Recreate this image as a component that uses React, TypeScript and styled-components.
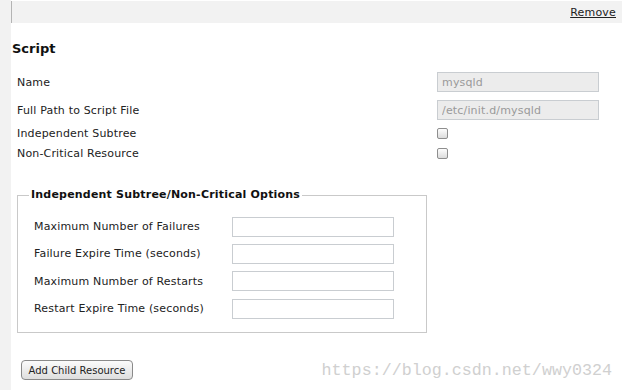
import React from "react";
import styled, { createGlobalStyle } from "styled-components";

const Global = createGlobalStyle`
  html, body { margin: 0; padding: 0; background: #fff; }
  body { font-family: "DejaVu Sans", "Liberation Sans", sans-serif; font-size: 11px; color: #222; }
`;

const Page = styled.div`
  display: flex;
  width: 622px;
  height: 390px;
  overflow: hidden;
`;

const LeftStrip = styled.div`
  width: 11px;
  flex: none;
  background: #f2f2f2;
`;

const Main = styled.div`
  flex: 1;
  display: flex;
  flex-direction: column;
`;

const TopBar = styled.div`
  margin-top: 1px;
  height: 22px;
  background: #f2f2f2;
  border-left: 1px solid #b4b4b4;
  display: flex;
  justify-content: flex-end;
  align-items: flex-end;
  padding: 0 6px 4px 0;
  box-sizing: border-box;
`;

const RemoveLink = styled.a`
  color: #222;
  text-decoration: underline;
  font-size: 11px;
  line-height: 13px;
  letter-spacing: 0.2px;
  cursor: pointer;
`;

const Heading = styled.h3`
  margin: 18px 0 0 1px;
  font-size: 13px;
  font-weight: bold;
  line-height: 16px;
  color: #111;
`;

const Form = styled.div`
  display: flex;
  flex-direction: column;
  margin: 11px 0 0 6px;
`;

const Row = styled.div<{ $h: number; $labelW: number }>`
  display: grid;
  grid-template-columns: ${(p) => p.$labelW}px auto;
  align-items: center;
  height: ${(p) => p.$h}px;
`;

const Label = styled.span`
  font-size: 11px;
  letter-spacing: 0.17px;
  color: #222;
  white-space: nowrap;
`;

const TextInput = styled.input<{ $disabled?: boolean }>`
  width: 162px;
  height: 20px;
  box-sizing: border-box;
  margin: 0;
  padding: 0 0 0 4px;
  font-family: "DejaVu Sans", sans-serif;
  font-size: 11px;
  letter-spacing: 0.17px;
  color: #9a9a9a;
  background: ${(p) => (p.$disabled ? "#ececec" : "#fff")};
  border: 1px solid #c9cdd1;
  border-radius: 0;
  outline: none;
`;

const Check = styled.span`
  display: block;
  width: 11px;
  height: 11px;
  box-sizing: border-box;
  border: 1px solid #8e8e8e;
  border-radius: 2px;
  background: linear-gradient(#fdfdfd, #dcdcdc);
`;

const Fieldset = styled.fieldset`
  width: 410px;
  box-sizing: border-box;
  margin: 24px 0 0 0;
  padding: 0 0 10px 11px;
  border: 1px solid #c9c9c9;
`;

const Legend = styled.legend`
  padding: 0 2px;
  font-size: 11px;
  font-weight: bold;
  letter-spacing: 0.2px;
  line-height: 14px;
  color: #111;
`;

const FieldRows = styled.div`
  display: flex;
  flex-direction: column;
  padding: 11px 0 0 5px;
`;

const Footer = styled.div`
  display: flex;
  align-items: center;
  justify-content: space-between;
  margin: 27px 10px 0 10px;
`;

const Button = styled.button`
  width: 112px;
  height: 20px;
  box-sizing: border-box;
  padding: 0;
  font-family: "DejaVu Sans", sans-serif;
  font-size: 10px;
  color: #222;
  border: 1px solid #8a8a8a;
  border-radius: 4px;
  background: linear-gradient(#fbfbfb, #dedede);
`;

const Watermark = styled.span`
  font-family: "Liberation Mono", monospace;
  font-size: 16.7px;
  color: #d0d0d0;
`;

const topRows: { label: string; kind: "text" | "check"; value?: string; h: number }[] = [
  { label: "Name", kind: "text", value: "mysqld", h: 28 },
  { label: "Full Path to Script File", kind: "text", value: "/etc/init.d/mysqld", h: 28 },
  { label: "Independent Subtree", kind: "check", h: 18 },
  { label: "Non-Critical Resource", kind: "check", h: 22 },
];

const optionRows = [
  { label: "Maximum Number of Failures", h: 27 },
  { label: "Failure Expire Time (seconds)", h: 27 },
  { label: "Maximum Number of Restarts", h: 28 },
  { label: "Restart Expire Time (seconds)", h: 27 },
];

export default function App() {
  return (
    <>
      <Global />
      <Page>
        <LeftStrip />
        <Main>
          <TopBar>
            <RemoveLink>Remove</RemoveLink>
          </TopBar>
          <Heading>Script</Heading>
          <Form>
            {topRows.map((r) => (
              <Row key={r.label} $h={r.h} $labelW={420}>
                <Label>{r.label}</Label>
                {r.kind === "text" ? (
                  <TextInput $disabled readOnly value={r.value} />
                ) : (
                  <Check />
                )}
              </Row>
            ))}
            <Fieldset>
              <Legend>Independent Subtree/Non-Critical Options</Legend>
              <FieldRows>
                {optionRows.map((r) => (
                  <Row key={r.label} $h={r.h} $labelW={198}>
                    <Label>{r.label}</Label>
                    <TextInput readOnly value="" />
                  </Row>
                ))}
              </FieldRows>
            </Fieldset>
          </Form>
          <Footer>
            <Button>Add Child Resource</Button>
            <Watermark>https://blog.csdn.net/wwy0324</Watermark>
          </Footer>
        </Main>
      </Page>
    </>
  );
}
